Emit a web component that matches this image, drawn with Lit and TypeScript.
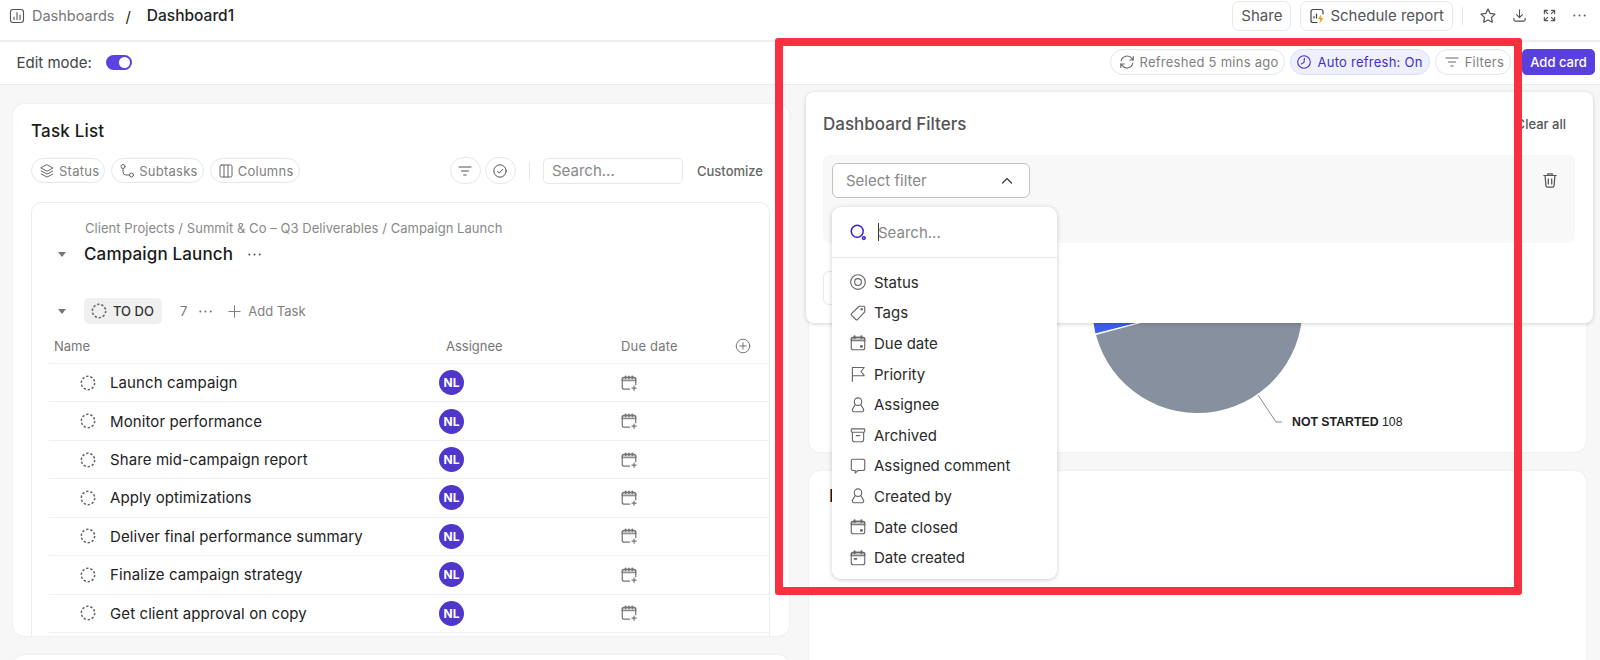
import { LitElement, css, html, svg } from 'lit'
import { customElement } from 'lit/decorators.js'

// all icons are drawn on a 16x16 box and scaled by the size argument
const icon = (body: unknown, size = 16, sw = 1.2) => html`
  <svg class="ic" width=${size} height=${size} viewBox="0 0 16 16" fill="none" stroke="currentColor"
    stroke-width=${sw} stroke-linecap="round" stroke-linejoin="round">${body}</svg>
`

const I = {
  board: svg`<rect x="1.5" y="1.5" width="13" height="13" rx="2.5"/><path d="M5 11.500V9M8 11.500V4.500M11 11.500V7"/>`,
  layers: svg`<path d="M8 1.800 14 5 8 8.200 2 5Z"/><path d="M2.200 8 8 11.100 13.800 8"/><path d="M2.200 11 8 14.100 13.800 11"/>`,
  subtasks: svg`<circle cx="4" cy="3.500" r="2"/><circle cx="12.500" cy="12" r="2"/><path d="M4 5.500V9a3 3 0 0 0 3 3h3.500"/>`,
  columns: svg`<rect x="2" y="2" width="12" height="12" rx="1.500"/><path d="M6 2v12M10 2v12"/>`,
  filter: svg`<path d="M2 4h12M4.500 8h7M6.800 12h2.400"/>`,
  check: svg`<circle cx="8" cy="8" r="6.200"/><path d="M5.400 8.200 7.300 10l3.300-3.600"/>`,
  refresh: svg`<path d="M2.200 7A6 6 0 0 1 13 4.600L14 6M13.800 9A6 6 0 0 1 3 11.400L2 10"/><path d="M14.200 2.600V6h-3.400M1.800 13.400V10h3.400"/>`,
  clock: svg`<circle cx="8" cy="8" r="6.300"/><path d="M8.400 4.400 8 8.400 5.400 10"/>`,
  star: svg`<path d="M8 1.800 9.900 5.700l4.300.6-3.100 3 .7 4.300L8 11.600l-3.800 2 .7-4.300-3.100-3 4.300-.6Z"/>`,
  download: svg`<path d="M8 2v8M4.800 7 8 10.200 11.200 7M2 11v1.500A1.500 1.500 0 0 0 3.500 14h9a1.500 1.500 0 0 0 1.500-1.500V11"/>`,
  expand: svg`<path d="M2.500 6V2.500H6M2.500 2.500 6 6M13.500 6V2.500H10M13.500 2.500 10 6M2.500 10v3.500H6M2.500 13.500 6 10M13.500 10v3.500H10M13.500 13.500 10 10"/>`,
  trash: svg`<path d="M2.500 4h11M6 4V2.500h4V4M3.600 4l.8 9a1.500 1.500 0 0 0 1.500 1.300h4.200a1.500 1.500 0 0 0 1.500-1.300l.8-9M6.500 7v4.500M9.500 7v4.500"/>`,
  chevron: svg`<path d="M3.500 10 8 5.500 12.500 10"/>`,
  search: svg`<circle cx="6.800" cy="6.800" r="5.600"/><circle cx="13" cy="13.200" r="1.300"/>`,
  target: svg`<circle cx="8" cy="8" r="6.500"/><circle cx="8" cy="8" r="3"/>`,
  tag: svg`<path d="M9 2h4a1 1 0 0 1 1 1v4L7.500 13.800a1 1 0 0 1-1.400 0L2.200 9.900a1 1 0 0 1 0-1.400Z"/><circle cx="11.300" cy="4.700" r=".6"/>`,
  calDot: svg`<rect x="2" y="3" width="12" height="11" rx="1.800"/><path d="M2 6h12V4.800A1.800 1.800 0 0 0 12.200 3H3.800A1.800 1.800 0 0 0 2 4.800Z" fill="currentColor" fill-opacity=".4"/><path d="M5 1.800v2M11 1.800v2" stroke-width="1.600"/><circle cx="11" cy="11" r=".8" fill="currentColor"/>`,
  calTop: svg`<rect x="2" y="3" width="12" height="11" rx="1.800"/><path d="M2 6h12V4.800A1.800 1.800 0 0 0 12.200 3H3.800A1.800 1.800 0 0 0 2 4.800Z" fill="currentColor" fill-opacity=".4"/><path d="M5 1.800v2M11 1.800v2" stroke-width="1.600"/><path d="M5 8.800h1.500" stroke-width="1.600"/>`,
  flag: svg`<path d="M3 14.500V2.200l10.500 0-2.800 3.600 2.800 3.700H3"/>`,
  person: svg`<circle cx="8" cy="5" r="3.300"/><path d="M5.500 7.700 3.200 11.500a1.600 1.600 0 0 0 1.400 2.500h6.800a1.600 1.600 0 0 0 1.400-2.500L10.500 7.700"/>`,
  archive: svg`<rect x="2" y="2.500" width="12" height="3" rx=".8"/><path d="M3 5.500V12a2 2 0 0 0 2 2h6a2 2 0 0 0 2-2V5.500M6.500 8.500h3"/>`,
  comment: svg`<path d="M3.500 2h9A1.500 1.500 0 0 1 14 3.500v7a1.500 1.500 0 0 1-1.500 1.500H8l-2.500 2.200V12h-2A1.500 1.500 0 0 1 2 10.500v-7A1.500 1.500 0 0 1 3.500 2Z"/>`,
  calPlus: svg`<path d="M8.500 13.500H3.800A1.800 1.800 0 0 1 2 11.700V4.800A1.800 1.800 0 0 1 3.800 3h8.400A1.800 1.800 0 0 1 14 4.800V9.500"/><path d="M2 6h12V4.800A1.800 1.800 0 0 0 12.200 3H3.800A1.800 1.800 0 0 0 2 4.800Z" fill="currentColor" fill-opacity=".35"/><path d="M5 2v2M8 2v2M11 2v2" stroke-width="1.500"/><path d="M12.500 10.800v3.600M10.700 12.600h3.600"/>`,
  plusCircle: svg`<circle cx="8" cy="8" r="6.800"/><path d="M8 4.800v6.400M4.800 8h6.400"/>`,
  plus: svg`<path d="M8 2v12M2 8h12"/>`,
  dashed: svg`<circle cx="8" cy="8" r="6.700" stroke-dasharray="2.400 1.810" stroke-linecap="butt"/>`,
  dots: svg`<g fill="currentColor" stroke="none"><circle cx="2.500" cy="8" r="1"/><circle cx="8" cy="8" r="1"/><circle cx="13.500" cy="8" r="1"/></g>`,
}

const TASKS = [
  'Launch campaign',
  'Monitor performance',
  'Share mid-campaign report',
  'Apply optimizations',
  'Deliver final performance summary',
  'Finalize campaign strategy',
  'Get client approval on copy',
]

const FILTERS: [string, unknown][] = [
  ['Status', I.target],
  ['Tags', I.tag],
  ['Due date', I.calDot],
  ['Priority', I.flag],
  ['Assignee', I.person],
  ['Archived', I.archive],
  ['Assigned comment', I.comment],
  ['Created by', I.person],
  ['Date closed', I.calDot],
  ['Date created', I.calTop],
]

@customElement('app-root')
export class AppRoot extends LitElement {
  static styles = css`
    :host {
      display: block;
      position: relative;
      width: 1600px;
      height: 660px;
      overflow: hidden;
      background: #f7f7f7;
      font-family: Inter, 'Noto Sans', sans-serif;
      color: #222;
    }
    .ic { flex: none; display: block; }

    .topbar {
      display: flex;
      align-items: center;
      height: 42px;
      box-sizing: border-box;
      padding: 0 13px 9px 8.500px;
      background: #fff;
      border-bottom: 2px solid #eeeeee;
    }
    .board { color: #555; }
    .crumb { margin-left: 7.500px; font-size: 14.500px; color: #777; }
    .slash { margin: 2px 16px 0 11px; font-size: 15px; color: #222; }
    .crumb-now { font-size: 15.500px; font-weight: 500; color: #222; }
    .top-right { margin-left: auto; display: flex; align-items: center; }
    .top-btn {
      display: flex;
      align-items: center;
      gap: 5px;
      height: 30px;
      box-sizing: border-box;
      padding: 0 8px;
      border: 1px solid #e9e9e9;
      border-radius: 7px;
      font-size: 15px;
      color: #555;
      margin-right: 9px;
    }
    .sched-ic { color: #444; }
    .vline { width: 1px; height: 18px; background: #e8e8e8; }
    .tool { color: #555; margin-left: 15px; }
    .tool.first { margin-left: 16px; }

    .editbar {
      display: flex;
      align-items: center;
      height: 43px;
      box-sizing: border-box;
      padding: 0 5px 2px 16.500px;
      background: #fff;
      border-bottom: 1px solid #ebebeb;
    }
    .edit-label { font-size: 15px; color: #444; }
    .toggle {
      width: 26px;
      height: 15px;
      margin-left: 14px;
      border-radius: 8px;
      background: #5a43e0;
      display: flex;
      align-items: center;
      justify-content: flex-end;
      padding-right: 2px;
      box-sizing: border-box;
    }
    .toggle i { width: 11px; height: 11px; border-radius: 50%; background: #fff; }
    .edit-right { margin-left: auto; display: flex; align-items: center; gap: 5px; }
    .chip {
      display: flex;
      align-items: center;
      gap: 5px;
      height: 26px;
      box-sizing: border-box;
      padding: 0 6px 0 8px;
      border: 1px solid #e6e6e6;
      border-radius: 13px;
      background: #fff;
      font-size: 13px;
      letter-spacing: 0.25px;
      color: #808080;
      white-space: nowrap;
    }
    .chip.on { padding-left: 5px; background: #eff0fd; border-color: #dcdcf8; color: #3f2fd0; }
    .chip .ic { color: #666; }
    .chip.on .ic { color: #3f2fd0; }
    .add {
      height: 26px;
      width: 73px;
      margin-left: 6px;
      border-radius: 5px;
      background: #5940dc;
      color: #fff;
      font-size: 13px;
      font-weight: 500;
      display: flex;
      align-items: center;
      justify-content: center;
    }

    .main {
      display: grid;
      grid-template-columns: 776px 777px;
      column-gap: 20px;
      padding: 19px 14px 0 13px;
    }
    .col { display: flex; flex-direction: column; gap: 19px; }
    .card {
      background: #fff;
      border-radius: 11px;
      box-shadow: 0 0 2px rgba(0, 0, 0, 0.1);
      overflow: hidden;
    }
    .tasks { height: 532px; display: flex; flex-direction: column; box-sizing: border-box; padding: 17px 19px 0 18px; }
    .title { font-size: 17px; letter-spacing: 0.2px; font-weight: 500; line-height: 20px; color: #1c1c1c; }
    .tools { display: flex; align-items: center; margin-top: 16px; padding-right: 7px; }
    .tools .chip { height: 25px; padding: 0 5px 0 7px; margin-right: 6px; gap: 4px; }
    .round {
      width: 31px;
      height: 27px;
      margin-right: 4px;
      box-sizing: border-box;
      border: 1px solid #e6e6e6;
      border-radius: 14px;
      color: #555;
      display: flex;
      align-items: center;
      justify-content: center;
    }
    .round.first { margin-left: auto; }
    .tools .vline { margin: 0 13px 0 9px; }
    .search {
      width: 140px;
      height: 26px;
      box-sizing: border-box;
      padding-left: 8px;
      border: 1px solid #e8e8e8;
      border-radius: 5px;
      font-size: 15px;
      line-height: 24px;
      color: #888;
    }
    .customize { margin-left: 14px; font-size: 13px; font-weight: 500; color: #666; }

    .box {
      flex: 1;
      margin-top: 18px;
      padding: 16px 0 0 17px;
      border: 1px solid #ececec;
      border-bottom: 0;
      border-radius: 10px 10px 0 0;
      min-height: 0;
    }
    .path { margin-left: 36px; font-size: 13px; letter-spacing: 0.05px; line-height: 18px; color: #888; }
    .head { display: flex; align-items: center; margin-top: 4px; height: 26px; }
    .tri {
      flex: none;
      width: 0;
      height: 0;
      margin: 0 18px 0 9px;
      border-left: 4.500px solid transparent;
      border-right: 4.500px solid transparent;
      border-top: 5px solid #777;
    }
    .head-title { font-size: 17px; letter-spacing: 0.15px; font-weight: 500; color: #1a1a1a; }
    .dots { margin-left: 14px; color: #444; }
    .group { display: flex; align-items: center; margin-top: 31px; height: 26px; }
    .status {
      display: flex;
      align-items: center;
      gap: 6px;
      height: 26px;
      box-sizing: border-box;
      padding: 0 8px 0 7px;
      border-radius: 5px;
      background: #f0f0f0;
      font-size: 13px;
      font-weight: 500;
      color: #333;
    }
    .status .ic, .dash { color: #666; }
    .count { margin-left: 18px; font-size: 13px; color: #777; }
    .group .dots { margin-left: 11px; color: #666; }
    .addtask { display: flex; align-items: center; gap: 6px; margin-left: 14px; font-size: 13px; color: #808080; }
    .thead, .row { display: grid; grid-template-columns: 390px 181px 1fr; align-items: center; }
    .thead { height: 39px; margin-top: 1px; font-size: 13px; color: #777; border-bottom: 1px solid #f0f0f0; padding-top: 3px; box-sizing: border-box; }
    .thead > :nth-child(1) { padding-left: 5px; }
    .thead > :nth-child(2) { padding-left: 7px; }
    .thead > :nth-child(3) { display: flex; justify-content: space-between; padding: 0 18px 0 1px; letter-spacing: 0.2px; }
    .row { height: 38.430px; box-sizing: border-box; border-bottom: 1px solid #f0f0f0; }
    .row-name { display: flex; align-items: center; gap: 14px; padding-left: 31px; font-size: 15px; letter-spacing: 0.1px; color: #222; }
    .avatar {
      width: 25px;
      height: 25px;
      border-radius: 50%;
      background: #4f37cc;
      color: #fff;
      font-size: 12px;
      font-weight: 700;
      display: flex;
      align-items: center;
      justify-content: center;
    }
    .due { color: #777; }

    .chart { height: 348px; }
    .chart svg { display: block; }
    .pie-label { font-family: 'Liberation Sans', Arial, sans-serif; font-size: 12.300px; fill: #222; }
    .pie-label tspan { font-weight: 700; }
    .lower { height: 400px; padding: 15px 20px; box-sizing: border-box; }

    /* filter panel lies over the right column */
    .panel {
      position: absolute;
      left: 806px;
      top: 92px;
      width: 787px;
      height: 231px;
      box-sizing: border-box;
      padding: 0 18px 0 17px;
      background: #fff;
      border-radius: 8px;
      box-shadow: 0 1px 4px rgba(0, 0, 0, 0.18);
    }
    .panel-head { display: flex; align-items: center; justify-content: space-between; height: 63px; padding-right: 9px; }
    .panel-title { font-size: 17px; font-weight: 500; color: #555; }
    .clear { font-size: 13px; font-weight: 500; color: #555; }
    .filter-row {
      display: flex;
      justify-content: space-between;
      height: 88px;
      box-sizing: border-box;
      padding: 8px 16px 0 9px;
      background: #f8f8f8;
      border-radius: 6px;
    }
    .select {
      position: relative;
      width: 198px;
      height: 35px;
      box-sizing: border-box;
      padding: 0 14px 0 13px;
      border: 1px solid #c4c4c4;
      border-radius: 6px;
      background: #fff;
      display: flex;
      align-items: center;
      justify-content: space-between;
      font-size: 15px;
      color: #888;
    }
    .select > .ic { color: #444; }
    .trash { margin-top: 8px; color: #555; }
    .add-filter {
      width: 150px;
      height: 34px;
      margin-top: 28px;
      box-sizing: border-box;
      border: 1px solid #e8e8e8;
      border-radius: 6px;
    }
    .menu {
      position: absolute;
      left: -1px;
      top: 43px;
      width: 225px;
      height: 372px;
      box-sizing: border-box;
      background: #fff;
      border-radius: 9px;
      box-shadow: 0 1px 5px rgba(0, 0, 0, 0.2);
    }
    .menu-search {
      display: flex;
      align-items: center;
      height: 51px;
      box-sizing: border-box;
      padding-left: 18px;
      border-bottom: 1px solid #e8e8e8;
      font-size: 15px;
      color: #888;
    }
    .menu-search .ic { color: #3a22d8; }
    .caret { width: 1px; height: 18px; margin: 0 -1px 0 11px; background: #333; }
    .menu-list { padding-top: 9px; }
    .menu-item { display: flex; align-items: center; gap: 7px; height: 30.600px; padding-left: 17px; font-size: 15px; color: #2a2a2a; }
    .menu-item .ic { color: #666; }

    .frame {
      position: absolute;
      left: 775px;
      top: 38px;
      width: 747px;
      height: 557px;
      box-sizing: border-box;
      border: 8px solid #fa2f40;
      border-radius: 3px;
      pointer-events: none;
    }
  `

  private renderRow(name: string) {
    return html`
      <div class="row">
        <div class="row-name"><span class="dash">${icon(I.dashed, 16, 1.5)}</span>${name}</div>
        <div><div class="avatar">NL</div></div>
        <div class="due">${icon(I.calPlus, 18, 1.1)}</div>
      </div>
    `
  }

  private renderPanel() {
    return html`
      <div class="panel">
        <div class="panel-head">
          <span class="panel-title">Dashboard Filters</span>
          <span class="clear">Clear all</span>
        </div>
        <div class="filter-row">
          <div class="select">
            Select filter ${icon(I.chevron, 16, 1.4)}
            <div class="menu">
              <div class="menu-search">
                ${icon(I.search, 17, 1.4)}<span class="caret"></span>Search...
              </div>
              <div class="menu-list">
                ${FILTERS.map(([label, ic]) => html`
                  <div class="menu-item">${icon(ic, 18, 1)}${label}</div>
                `)}
              </div>
            </div>
          </div>
          <div class="trash">${icon(I.trash, 18, 1.1)}</div>
        </div>
        <div class="add-filter"></div>
      </div>
    `
  }

  render() {
    return html`
      <div class="topbar">
        <span class="board">${icon(I.board, 16, 1.1)}</span>
        <span class="crumb">Dashboards</span>
        <span class="slash">/</span>
        <span class="crumb-now">Dashboard1</span>
        <div class="top-right">
          <div class="top-btn">Share</div>
          <div class="top-btn">
            <svg class="ic sched-ic" width="16" height="16" viewBox="0 0 16 16" fill="none" stroke="currentColor" stroke-width="1.200" stroke-linecap="round">
              <path d="M14 6V3.500A2 2 0 0 0 12 1.500H4A2 2 0 0 0 2 3.500v9a2 2 0 0 0 2 2h4M5 10V8.500M7.500 10V6"/>
              <path d="M12 6.500 9 11h2.200L10.500 15.500 14.500 10h-2.300Z" fill="#f0a020" stroke="none"/>
            </svg>
            Schedule report
          </div>
          <div class="vline"></div>
          <span class="tool first">${icon(I.star, 18, 1.1)}</span>
          <span class="tool">${icon(I.download, 15, 1.2)}</span>
          <span class="tool">${icon(I.expand, 15, 1.2)}</span>
          <span class="tool">${icon(I.dots, 15)}</span>
        </div>
      </div>

      <div class="editbar">
        <span class="edit-label">Edit mode:</span>
        <div class="toggle"><i></i></div>
        <div class="edit-right">
          <div class="chip">${icon(I.refresh, 16, 1.1)}Refreshed 5 mins ago</div>
          <div class="chip on">${icon(I.clock, 16, 1.1)}Auto refresh: On</div>
          <div class="chip">${icon(I.filter, 16, 1.1)}Filters</div>
          <div class="add">Add card</div>
        </div>
      </div>

      <div class="main">
        <div class="col">
          <div class="card tasks">
            <div class="title">Task List</div>
            <div class="tools">
              <div class="chip">${icon(I.layers, 16, 1)}Status</div>
              <div class="chip">${icon(I.subtasks, 16, 1)}Subtasks</div>
              <div class="chip">${icon(I.columns, 16, 1)}Columns</div>
              <div class="round first">${icon(I.filter, 16, 1.1)}</div>
              <div class="round">${icon(I.check, 16, 1)}</div>
              <div class="vline"></div>
              <div class="search">Search...</div>
              <div class="customize">Customize</div>
            </div>
            <div class="box">
              <div class="path">Client Projects / Summit &amp; Co – Q3 Deliverables / Campaign Launch</div>
              <div class="head">
                <span class="tri"></span>
                <span class="head-title">Campaign Launch</span>
                <span class="dots">${icon(I.dots, 15)}</span>
              </div>
              <div class="group">
                <span class="tri"></span>
                <div class="status">${icon(I.dashed, 16, 1.5)}TO DO</div>
                <span class="count">7</span>
                <span class="dots">${icon(I.dots, 15)}</span>
                <div class="addtask">${icon(I.plus, 15, 1.1)}Add Task</div>
              </div>
              <div class="thead">
                <div>Name</div>
                <div>Assignee</div>
                <div>Due date ${icon(I.plusCircle, 16, 1)}</div>
              </div>
              ${TASKS.map((t) => this.renderRow(t))}
            </div>
          </div>
          <div class="card lower"></div>
        </div>

        <div class="col">
          <div class="card chart">
            <svg width="777" height="348" viewBox="0 0 777 348">
              <path d="M388 204 L283 204 A105 105 0 0 0 286 230 Z" fill="#3d5cf0" stroke="#fff" stroke-width="1"/>
              <path d="M388 204 L287 231 A105 105 0 1 0 388 99 Z" fill="#87909e"/>
              <path d="M449 291 L467 318 L473 318" stroke="#8a8a8a" fill="none"/>
              <text class="pie-label" x="483" y="322"><tspan>NOT STARTED</tspan> 108</text>
            </svg>
          </div>
          <div class="card lower"><div class="title">I</div></div>
        </div>
      </div>

      ${this.renderPanel()}
      <div class="frame"></div>
    `
  }
}
